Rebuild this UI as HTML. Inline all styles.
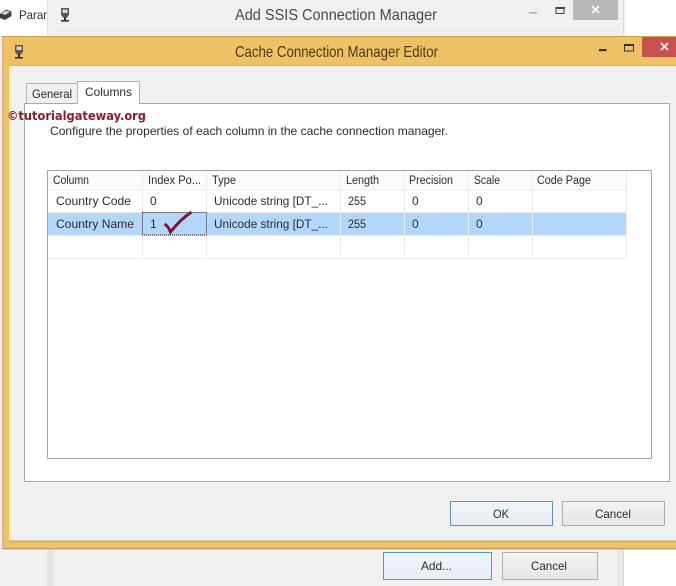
<!DOCTYPE html>
<html><head><meta charset="utf-8"><style>
html,body{margin:0;padding:0;background:#fff}
svg{display:block;filter:blur(.25px)}
text{font-family:"Liberation Sans",sans-serif;font-size:12px;fill:#2b2b2b}
.t{font-size:16px;fill:#4a4a4a}
</style></head><body>
<svg width="676" height="586" viewBox="0 0 676 586" xmlns="http://www.w3.org/2000/svg">
<defs>
<linearGradient id="b" x1="0" y1="0" x2="0" y2="1"><stop offset="0" stop-color="#f3f3f3"/><stop offset="1" stop-color="#e6e6e6"/></linearGradient>
<linearGradient id="bb" x1="0" y1="0" x2="0" y2="1"><stop offset="0" stop-color="#eef5fb"/><stop offset="1" stop-color="#e6edf3"/></linearGradient>
<g id="plug"><path d="M1 0h8v7l-2 2.500h-4l-2-2.500z" fill="#5a5a50"/><rect x="2.500" y="1.500" width="5" height="3.500" fill="#d8d8d0"/><rect x="4" y="9" width="2" height="4" fill="#333"/><rect x="1" y="12" width="8" height="1.600" fill="#333"/></g>
</defs>
<!-- background -->
<rect width="676" height="586" fill="#fff"/>
<rect x="47" y="0" width="577" height="586" fill="#f0f0f0"/>
<rect x="0" y="36" width="47" height="550" fill="#f0f0f0"/>
<rect x="47" y="0" width="1" height="36" fill="#e2e2e2"/>
<rect x="623" y="0" width="1.500" height="36" fill="#dcdcdc"/>
<rect x="54" y="30" width="563" height="1" fill="#e6e6e6"/>
<rect x="47" y="549" width="7" height="37" fill="#e4e4e4"/>
<rect x="617" y="549" width="7" height="37" fill="#e8e8e8"/>
<rect x="623" y="549" width="1" height="37" fill="#d8d8d8"/>
<!-- background window -->
<path d="M0 14L6 9.500L11.500 11.500V16L5 20L0 18z" fill="#3f3f3f"/><path d="M1.500 13.500L6 10.500L10 12L5 15z" fill="#d6d6d6"/>
<text x="19" y="19" textLength="28" lengthAdjust="spacingAndGlyphs">Parar</text>
<use href="#plug" x="60" y="8"/>
<text class="t" x="235" y="20" textLength="202" lengthAdjust="spacingAndGlyphs">Add SSIS Connection Manager</text>
<rect x="529" y="12" width="8" height="1.500" fill="#aaa"/>
<rect x="556" y="7.500" width="8" height="6" fill="none" stroke="#444" stroke-width="1"/><rect x="556" y="7" width="9" height="2" fill="#444"/>
<rect x="573" y="0" width="45" height="20" fill="#b8b8b8"/>
<path d="M592 6l7 7M599 6l-7 7" stroke="#fff" stroke-width="1.600"/>
<!-- bottom buttons of back window -->
<rect x="383.500" y="552.500" width="108" height="27" fill="url(#bb)" stroke="#5b94c2"/>
<text x="421" y="570" textLength="31" lengthAdjust="spacingAndGlyphs">Add...</text>
<rect x="502.500" y="552.500" width="95" height="27" fill="url(#b)" stroke="#adadad"/>
<text x="531" y="570" textLength="36" lengthAdjust="spacingAndGlyphs">Cancel</text>
<!-- front dialog -->
<rect x="2" y="36" width="674" height="513.500" fill="#e9c466"/>
<rect x="2" y="36" width="1.500" height="513" fill="#e7a98a"/>
<rect x="2" y="36" width="674" height="1" fill="#c9a252"/>
<rect x="3.500" y="37" width="672.500" height="29" fill="#eec264"/>
<rect x="9" y="65.500" width="667" height="1" fill="#c8a860"/>
<rect x="9" y="66" width="667" height="475" fill="#f0f0f0"/>
<rect x="9" y="66" width="2" height="475" fill="#fbeeb8"/>
<rect x="9" y="540.500" width="667" height="1.500" fill="#c9ab62"/>
<rect x="3.500" y="542" width="672.500" height="6" fill="#eec264"/>
<rect x="2" y="548" width="674" height="1.200" fill="#b9a062"/>
<use href="#plug" x="14" y="45"/>
<text class="t" x="235" y="57" textLength="203" lengthAdjust="spacingAndGlyphs" style="fill:#4a3a14">Cache Connection Manager Editor</text>
<rect x="599" y="49" width="7.500" height="2.200" fill="#333"/>
<rect x="624.500" y="44.500" width="9" height="6.500" fill="none" stroke="#3a3014" stroke-width="1"/><rect x="624" y="44" width="10" height="2" fill="#3a3014"/>
<rect x="642" y="37" width="34" height="20" fill="#c75050"/>
<path d="M661 43l7 7M668 43l-7 7" stroke="#fff" stroke-width="1.700"/>
<!-- tabs -->
<rect x="26.500" y="83.500" width="51" height="21" fill="#f0f0f0" stroke="#b4b4b4"/>
<text x="32" y="98" textLength="40" lengthAdjust="spacingAndGlyphs">General</text>
<rect x="24.500" y="103.500" width="645" height="378" fill="#fff" stroke="#a9a9a9"/>
<path d="M77.500 104V81.500H139.500V104" fill="#fff" stroke="#b4b4b4"/>
<rect x="78" y="100" width="61" height="5" fill="#fff"/>
<text x="85" y="96" textLength="47" lengthAdjust="spacingAndGlyphs">Columns</text>
<!-- watermark -->
<text x="7" y="120" textLength="139" lengthAdjust="spacingAndGlyphs" style="font-family:'DejaVu Sans',sans-serif;font-weight:bold;font-size:12px;fill:#8c1d2f">©tutorialgateway.org</text>
<text x="50" y="135" textLength="398" lengthAdjust="spacingAndGlyphs">Configure the properties of each column in the cache connection manager.</text>
<!-- grid -->
<rect x="47.500" y="170.500" width="604" height="288" fill="#fff" stroke="#a3a3a3"/>
<rect x="48" y="171" width="579" height="18" fill="#fbfbfb"/>
<rect x="48" y="189" width="579" height="1.500" fill="#f0f0f0"/>
<rect x="48" y="213" width="579" height="22" fill="#b3d7fb"/>
<g stroke="#ececec" stroke-width="1">
<path d="M142.500 171V258M206.500 171V258M340.500 171V258M404.500 171V258M468.500 171V258M532.500 171V258M626.500 171V258"/>
<path d="M48 212.500H627M48 235.500H627M48 258.500H627"/>
</g>
<g stroke="#e4f0fc" stroke-width="1"><path d="M340.500 213V235M404.500 213V235M468.500 213V235M532.500 213V235"/></g>
<text x="53" y="184" textLength="36" lengthAdjust="spacingAndGlyphs" style="font-size:11.500px">Column</text>
<text x="148" y="184" textLength="53" lengthAdjust="spacingAndGlyphs" style="font-size:11.500px">Index Po...</text>
<text x="212" y="184" textLength="24" lengthAdjust="spacingAndGlyphs" style="font-size:11.500px">Type</text>
<text x="346" y="184" textLength="33" lengthAdjust="spacingAndGlyphs" style="font-size:11.500px">Length</text>
<text x="409" y="184" textLength="44" lengthAdjust="spacingAndGlyphs" style="font-size:11.500px">Precision</text>
<text x="474" y="184" textLength="26" lengthAdjust="spacingAndGlyphs" style="font-size:11.500px">Scale</text>
<text x="537" y="184" textLength="54" lengthAdjust="spacingAndGlyphs" style="font-size:11.500px">Code Page</text>
<text x="56" y="205" textLength="75" lengthAdjust="spacingAndGlyphs">Country Code</text>
<text x="150" y="205">0</text>
<text x="214" y="205" textLength="114" lengthAdjust="spacingAndGlyphs">Unicode string [DT_...</text>
<text x="348" y="205" textLength="18" lengthAdjust="spacingAndGlyphs">255</text>
<text x="412" y="205">0</text>
<text x="476" y="205">0</text>
<text x="56" y="228" textLength="78" lengthAdjust="spacingAndGlyphs">Country Name</text>
<text x="150" y="228">1</text>
<text x="214" y="228" textLength="114" lengthAdjust="spacingAndGlyphs">Unicode string [DT_...</text>
<text x="348" y="228" textLength="18" lengthAdjust="spacingAndGlyphs">255</text>
<text x="412" y="228">0</text>
<text x="476" y="228">0</text>
<rect x="142.500" y="212.500" width="64" height="22.500" fill="none" stroke="#111" stroke-width="1" stroke-dasharray="1 1"/>
<path d="M164.500 224C167 225.500 169 228 170.500 232C176 225 184 217 191.500 212" fill="none" stroke="#7f1734" stroke-width="3"/>
<!-- buttons -->
<rect x="450.500" y="501.500" width="102" height="24" fill="url(#bb)" stroke="#5b94c2"/>
<text x="493" y="518" textLength="16" lengthAdjust="spacingAndGlyphs">OK</text>
<rect x="562.500" y="501.500" width="102" height="24" fill="url(#b)" stroke="#adadad"/>
<text x="595" y="518" textLength="36" lengthAdjust="spacingAndGlyphs">Cancel</text>
</svg>
</body></html>
